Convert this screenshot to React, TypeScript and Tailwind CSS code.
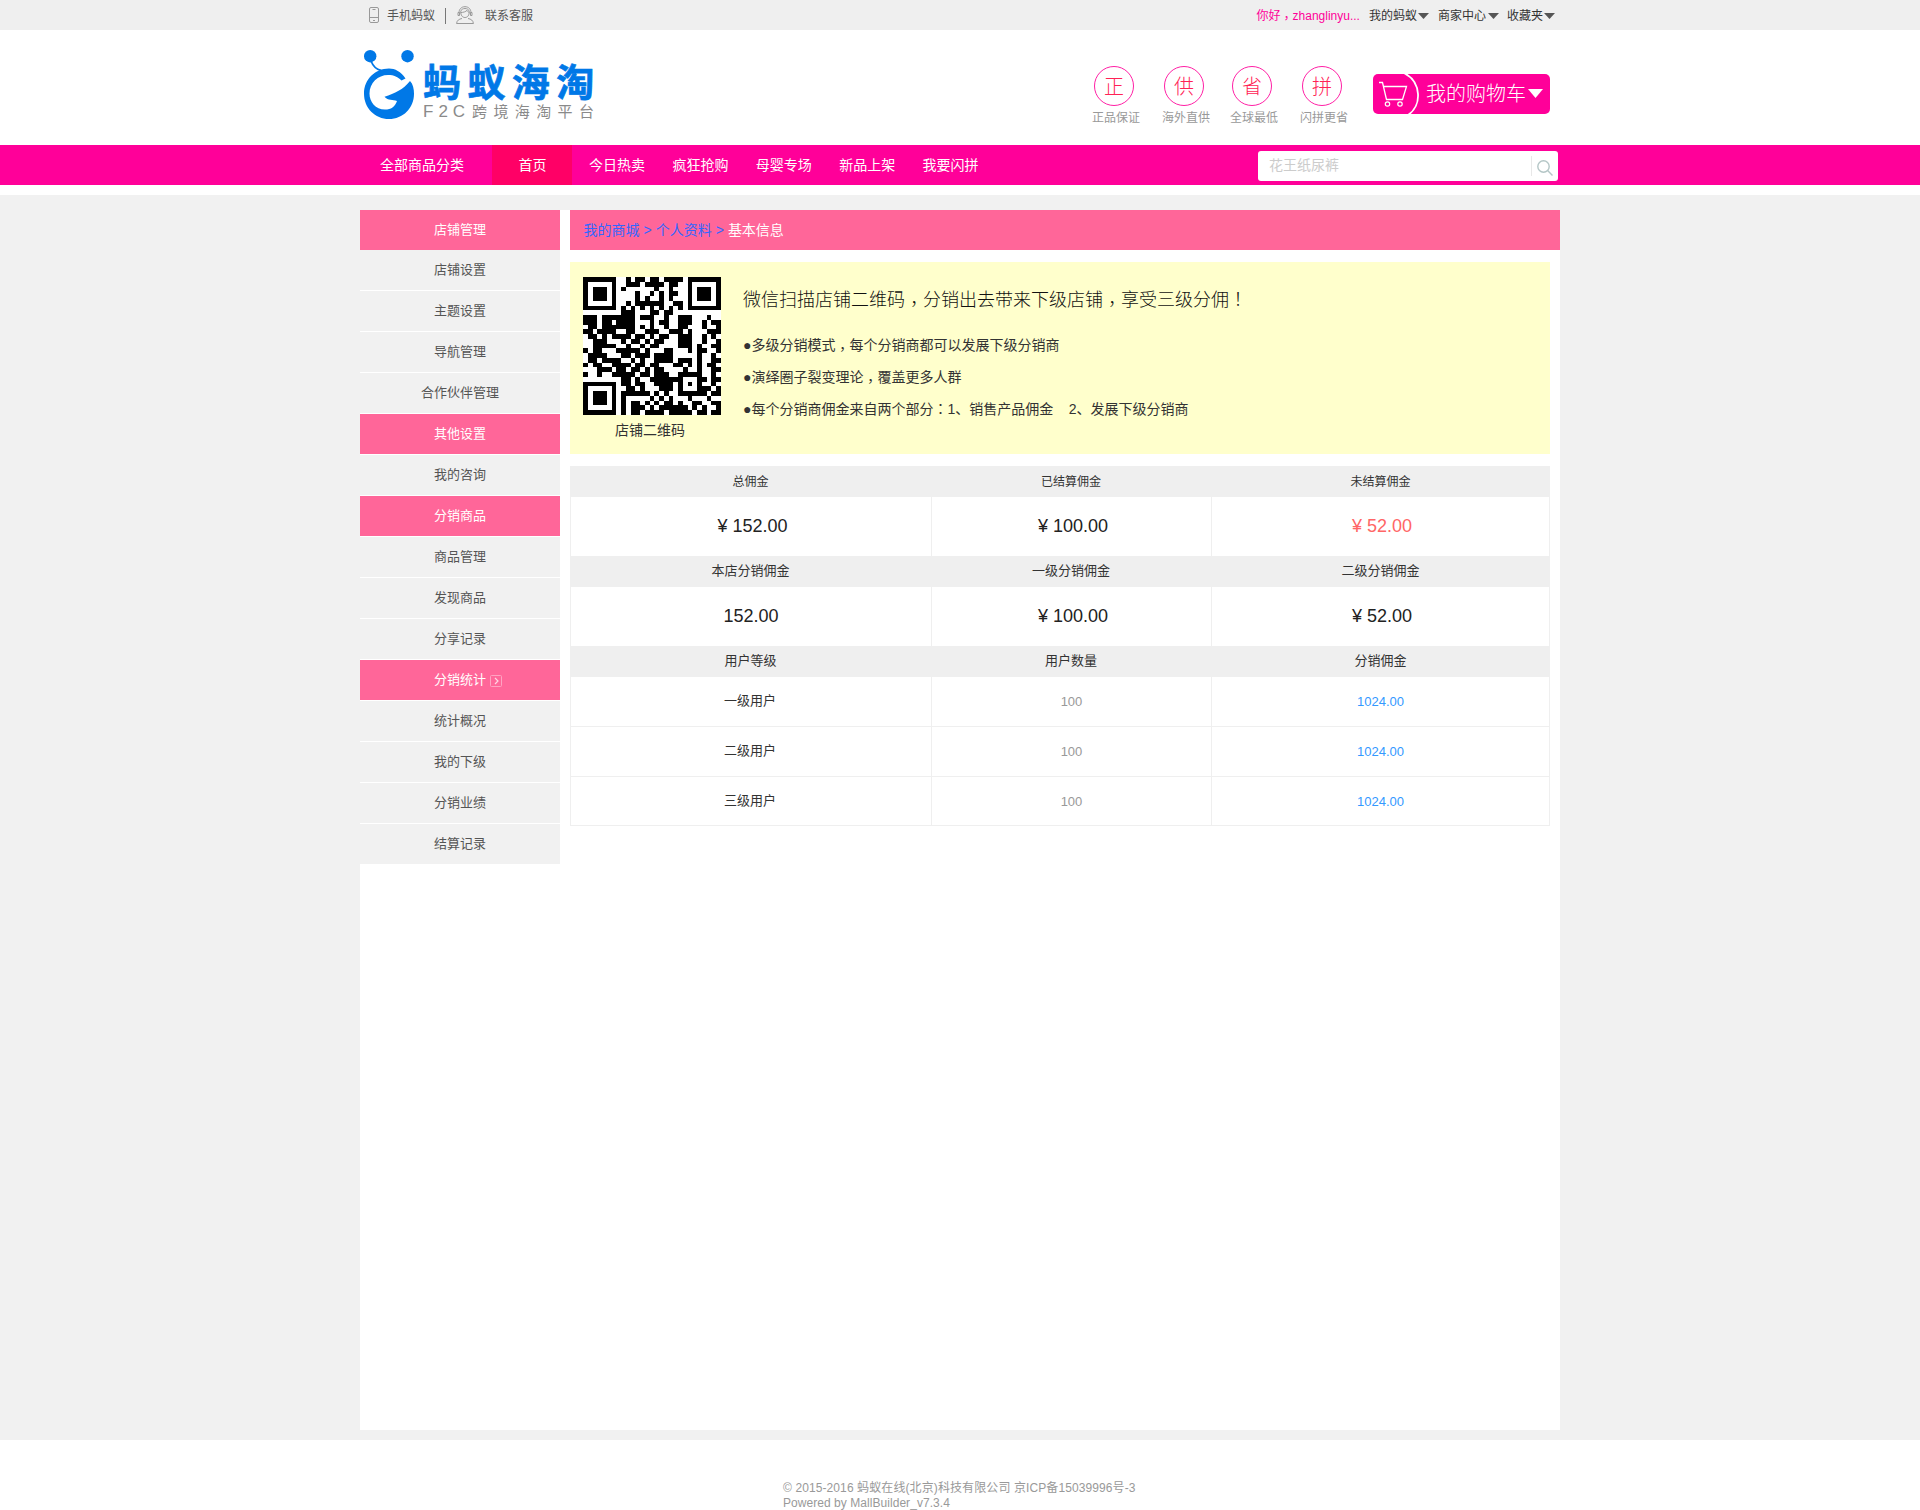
import React from "react";

const QR = [
  "11111110010110110111101111111",
  "10000010011101111011001000001",
  "10111010100000010010001011101",
  "10111010000100101011001011101",
  "10111010000101001010001011101",
  "10000010010111111001101000001",
  "11111110101010101010101111111",
  "00000000111000110110000000000",
  "11101111111011100100111000100",
  "11101101111000101100111001011",
  "01101111111010100100110001001",
  "11011110011001110011101000111",
  "01101011110110101100111001010",
  "00111000101101011000111001001",
  "00111110010010110000111010011",
  "10110001111101000110001011001",
  "01111000110111011110000010010",
  "01101111001010011110111010011",
  "10110011110110110001101010110",
  "00011101101101011000010010011",
  "10010011111011011100111110010",
  "00000000110100111111100011011",
  "11111110110110011110101010010",
  "10000010011010001110100011101",
  "10111010111111010100111111011",
  "10111010100000101010001000100",
  "10111010101101010110100110011",
  "10000010101110101111110101001",
  "11111110101101111011111011011",
];

function QrCode() {
  return (
    <svg width="138" height="138" viewBox="0 0 29 29" className="block bg-white" shapeRendering="crispEdges">
      {QR.map((row, y) =>
        row.split("").map((c, x) => (c === "1" ? <rect key={`${x}-${y}`} x={x} y={y} width="1" height="1" fill="#000" /> : null)),
      )}
    </svg>
  );
}

/* Full-width punctuation, centred in its cell. */
function Punct({ c }: { c: string }) {
  return (
    <span
      lang="zh-TW"
      className={`font-['Noto_Sans_CJK_TC',sans-serif] leading-[0] ${c === "，" ? "relative top-[0.25em]" : ""}`}
    >
      {c}
    </span>
  );
}

function Zh({ text }: { text: string }) {
  return (
    <>
      {text.split(/([，！：])/).map((part, i) => (i % 2 === 1 ? <Punct key={i} c={part} /> : part))}
    </>
  );
}

function Caret() {
  return (
    <svg width="11" height="6" viewBox="0 0 11 6" className="block">
      <path d="M0 0H11L5.5 6Z" fill="#555" />
    </svg>
  );
}

function TopBar() {
  return (
    <div className="h-[30px] bg-[#efefef] text-[12px] text-[#555]">
      <div className="mx-auto flex h-[26px] w-[1200px] items-center pt-[1px]">
        <svg width="10" height="16" viewBox="0 0 10 16" className="mt-[3px] ml-[9px] block" fill="none" stroke="#999">
          <rect x="0.5" y="0.5" width="9" height="15" rx="1.5" />
          <path d="M0.5 10.5H9.5M3.5 2.5H6.5M4 13.5H6" />
        </svg>
        <span className="mt-[5px] ml-[8px] leading-[18px]">手机蚂蚁</span>
        <span className="mt-[4px] ml-[10px] h-[16px] w-px bg-[#777]" />
        <svg width="18" height="18" viewBox="0 0 18 18" className="mt-[2px] ml-[10px] block" fill="none" stroke="#999">
          <path d="M3 7C3 3 5.5 .7 9 .7S15 3 15 7" />
          <path d="M4.7 6.5C7 6.5 10 5.8 11 4.3 11.5 5.5 12.5 6.3 13.3 6.5" />
          <path d="M4.7 5.5C4.7 9.5 6.5 11.5 9 11.5S13.3 9.5 13.3 5.5C13 3.5 11 2.5 9 2.5S5 3.5 4.7 5.5Z" />
          <path d="M2 6.5H3.5V9.5H2ZM14.5 6.5H16V9.5H14.5Z" />
          <path d="M.6 17.5C.8 14.5 3 13 6 12.5M17.4 17.5C17.2 14.5 15 13 12 12.5M.5 17.5H17.5" />
        </svg>
        <span className="mt-[5px] ml-[11px] leading-[18px]">联系客服</span>
        <div className="mt-[5px] ml-auto flex items-center pr-[5px] leading-[18px] text-[#333]">
          <span className="mr-[9px] text-[#ff0099]">
            <Zh text="你好，zhanglinyu..." />
          </span>
          <span className="mr-px">我的蚂蚁</span>
          <Caret />
          <span className="mr-[2px] ml-[9px]">商家中心</span>
          <Caret />
          <span className="mr-px ml-[8px]">收藏夹</span>
          <Caret />
        </div>
      </div>
    </div>
  );
}

function Logo() {
  return (
    <div className="flex pt-[20px] pl-[4px]">
      <svg width="50" height="69" viewBox="0 0 50 69" className="block">
        <g fill="#0078e7">
          <circle cx="6.2" cy="6.2" r="6.2" />
          <circle cx="43.5" cy="6.2" r="6.2" />
          <path d="M41.5 28.5C37 21.5 31 18.5 25 18.5 11 18.5 0 29.5 0 43.7S11 69 25 69 50 58 50 43.7C50 39 49 34 46 31C39 40 31 43 20.5 46.8C24 51 29 49.5 33 51C31 57 27 59.5 21 59.5C11.5 59.5 5.5 52 5.5 43.5C5.5 33 14 25 24 25C30 25 34 27 37.5 30.5Z" />
        </g>
        <path d="M7 11C9 16 12.5 19.5 17 20.5" fill="none" stroke="#0078e7" strokeWidth="1.8" />
      </svg>
      <div className="pl-[9px] whitespace-nowrap">
        <div className="mt-[13px] h-[40px] text-[38px] leading-[40px] font-bold tracking-[6.4px] text-[#0078e7] [-webkit-text-stroke:0.7px_#0078e7]">
          蚂蚁海淘
        </div>
        <div className="mt-[-1px] flex h-[20px] items-baseline leading-[20px] text-[#8a8a8a]">
          <span className="w-[49px] text-[17px] tracking-[5px]">F2C</span>
          <span className="text-[15px] tracking-[6.4px]">跨境海淘平台</span>
        </div>
      </div>
    </div>
  );
}

const BADGES = [
  { c: "正", t: "正品保证", ml: "ml-0" },
  { c: "供", t: "海外直供", ml: "ml-[22px]" },
  { c: "省", t: "全球最低", ml: "ml-[20px]" },
  { c: "拼", t: "闪拼更省", ml: "ml-[22px]" },
];

function Header() {
  return (
    <div className="mx-auto flex h-[115px] w-[1200px] justify-between bg-white">
      <Logo />
      <div className="flex pr-[10px]">
        {BADGES.map((b) => (
          <div key={b.c} className={`${b.ml} flex w-[48px] flex-col items-center pt-[36px]`}>
            <div className="mr-[4px] flex h-[40px] w-[40px] items-center justify-center rounded-full border border-[#ff1fa5] pt-[2px] text-[20px] leading-[20px] font-light text-[#ff2255]">
              {b.c}
            </div>
            <div className="mt-[3px] text-[12px] leading-[18px] whitespace-nowrap text-[#999]">{b.t}</div>
          </div>
        ))}
        <div className="mt-[44px] ml-[25px] flex h-[40px] w-[177px] rounded-[5px] bg-[#ff0099] text-white">
          <svg width="53" height="40" viewBox="0 0 53 40" className="block shrink-0" fill="none" stroke="#fff">
            <path d="M31 -1C49 8 49 32 35 41" strokeWidth="1.8" />
            <path d="M6 8.5H9.5L13.5 25.5H29.5L33.5 12.5H10.5" strokeWidth="1.3" />
            <circle cx="14.5" cy="30" r="2.2" strokeWidth="1.2" />
            <circle cx="27" cy="30" r="2.2" strokeWidth="1.2" />
          </svg>
          <span className="text-[20px] leading-[40px] font-light whitespace-nowrap">我的购物车</span>
          <svg width="15" height="9" viewBox="0 0 15 9" className="mt-[15px] ml-[2px] block shrink-0">
            <path d="M0 0H15L7.5 9Z" fill="#fff" />
          </svg>
        </div>
      </div>
    </div>
  );
}

const NAV = ["今日热卖", "疯狂抢购", "母婴专场", "新品上架", "我要闪拼"];

function Nav() {
  return (
    <div className="h-[40px] bg-[#ff0099]">
      <div className="mx-auto flex h-[40px] w-[1200px] text-[14px] leading-[40px] text-white">
        <div className="w-[132px] pl-[20px]">全部商品分类</div>
        <div className="w-[80px] bg-[#ff0066] pl-[1px] text-center">首页</div>
        <div className="flex gap-[27.4px] pl-[17px]">
          {NAV.map((n) => (
            <span key={n}>{n}</span>
          ))}
        </div>
        <div className="mt-[6px] mr-[2px] ml-auto flex h-[30px] w-[300px] items-center rounded-[3px] bg-white">
          <span className="h-[30px] grow pl-[11px] leading-[28px] text-[#ccc]">花王纸尿裤</span>
          <span className="h-[20px] w-px bg-[#e8e8e8]" />
          <svg width="16" height="16" viewBox="0 0 16 16" className="mt-[3px] mr-[5px] ml-[5px] block" fill="none" stroke="#b4c6c6" strokeWidth="1.4">
            <circle cx="6.5" cy="6.5" r="5.7" />
            <path d="M10.6 10.6L15.5 15.5" />
          </svg>
        </div>
      </div>
    </div>
  );
}

const MENU: { t: string; head?: boolean; arrow?: boolean }[] = [
  { t: "店铺设置" },
  { t: "主题设置" },
  { t: "导航管理" },
  { t: "合作伙伴管理" },
  { t: "其他设置", head: true },
  { t: "我的咨询" },
  { t: "分销商品", head: true },
  { t: "商品管理" },
  { t: "发现商品" },
  { t: "分享记录" },
  { t: "分销统计", head: true, arrow: true },
  { t: "统计概况" },
  { t: "我的下级" },
  { t: "分销业绩" },
  { t: "结算记录" },
];

function Sidebar() {
  return (
    <div className="w-[200px] text-center text-[13px] leading-[40px]">
      <div className="h-[40px] bg-[#ff6699] text-white">店铺管理</div>
      {MENU.map((m) => (
        <div
          key={m.t}
          className={`relative mb-px h-[40px] ${m.head ? "bg-[#ff6699] text-white" : "bg-[#f1f1f1] text-[#555]"}`}
        >
          {m.t}
          {m.arrow && (
            <svg width="12" height="12" viewBox="0 0 12 12" className="absolute top-[15px] left-[130px] block" fill="none">
              <rect x="0.5" y="0.5" width="11" height="11" rx="1" stroke="#ffa3c2" />
              <path d="M5 3L8 6L5 9" stroke="#ffd6e4" strokeWidth="1.2" />
            </svg>
          )}
        </div>
      ))}
    </div>
  );
}

const GRID = "grid grid-cols-[361px_280px_339px] text-center";

function HeadRow({ cells, small }: { cells: string[]; small?: boolean }) {
  return (
    <div className={`${GRID} h-[31px] bg-[#efefef] text-[#333] ${small ? "text-[12px] leading-[32px]" : "text-[13px] leading-[30px]"}`}>
      {cells.map((c) => (
        <div key={c}>{c}</div>
      ))}
    </div>
  );
}

function Cell({ children, className = "" }: { children: React.ReactNode; className?: string }) {
  return <div className={`border-l border-[#efefef] last:border-r ${className}`}>{children}</div>;
}

function MoneyRow({ cells, red }: { cells: string[]; red?: boolean }) {
  return (
    <div className={`${GRID} h-[59px] text-[18px] leading-[59px] text-[#222]`}>
      {cells.map((c, i) => (
        <Cell key={c} className={`${c.startsWith("¥") ? "pl-[3px]" : ""} ${red && i === 2 ? "text-[#ff6666]" : ""}`}>
          {c}
        </Cell>
      ))}
    </div>
  );
}

function Stats() {
  return (
    <div className="mt-[12px] w-[980px]">
      <HeadRow small cells={["总佣金", "已结算佣金", "未结算佣金"]} />
      <MoneyRow red cells={["¥ 152.00", "¥ 100.00", "¥ 52.00"]} />
      <HeadRow cells={["本店分销佣金", "一级分销佣金", "二级分销佣金"]} />
      <MoneyRow cells={["152.00", "¥ 100.00", "¥ 52.00"]} />
      <HeadRow cells={["用户等级", "用户数量", "分销佣金"]} />
      {["一级用户", "二级用户", "三级用户"].map((u) => (
        <div key={u} className={`${GRID} h-[50px] border-b border-[#efefef] text-[13px] leading-[48px] last:h-[49px]`}>
          <Cell className="pr-[2px] text-[#333]">{u}</Cell>
          <Cell className="leading-[49px] text-[#999]">100</Cell>
          <Cell className="leading-[49px] text-[#3399ff]">1024.00</Cell>
        </div>
      ))}
    </div>
  );
}

function Content() {
  return (
    <div className="w-[990px]">
      <div className="flex h-[40px] gap-[4px] bg-[#ff6699] pl-[13.5px] text-[14px] leading-[40px] text-[#3366ff]">
        <span>我的商城</span>
        <span>&gt;</span>
        <span>个人资料</span>
        <span>&gt;</span>
        <span className="text-white">基本信息</span>
      </div>
      <div className="mt-[12px] flex h-[192px] w-[980px] bg-[#ffffcc] text-[#333]">
        <div className="ml-[13px] w-[138px] pt-[15px]">
          <QrCode />
          <div className="pr-[4px] text-center text-[14px] leading-[30px]">店铺二维码</div>
        </div>
        <div className="ml-[22px] pt-[22px] text-[14px] leading-[32px] whitespace-pre">
          <div className="mb-[13px] text-[18px] leading-[32px] font-light text-[#111]">
            <Zh text="微信扫描店铺二维码，分销出去带来下级店铺，享受三级分佣！" />
          </div>
          <div>
            <Zh text="●多级分销模式，每个分销商都可以发展下级分销商" />
          </div>
          <div>
            <Zh text="●演绎圈子裂变理论，覆盖更多人群" />
          </div>
          <div>
            <Zh text="●每个分销商佣金来自两个部分：1、销售产品佣金    2、发展下级分销商" />
          </div>
        </div>
      </div>
      <Stats />
    </div>
  );
}

export default function App() {
  return (
    <div className="h-[1510px] bg-white font-['Liberation_Sans','Noto_Sans_CJK_SC',sans-serif]">
      <TopBar />
      <Header />
      <Nav />
      <div className="mt-[10px] h-[1245px] bg-[#f1f1f1] pt-[15px]">
        <div className="mx-auto flex h-[1220px] w-[1200px] items-start justify-between bg-white">
          <Sidebar />
          <Content />
        </div>
      </div>
      <div className="pt-[41px] pl-[783px] text-[12px] leading-[15px] text-[#999]">
        <div className="tracking-[0.1px]">© 2015-2016 蚂蚁在线(北京)科技有限公司 京ICP备15039996号-3</div>
        <div className="tracking-[0.05px]">Powered by MallBuilder_v7.3.4</div>
      </div>
    </div>
  );
}
